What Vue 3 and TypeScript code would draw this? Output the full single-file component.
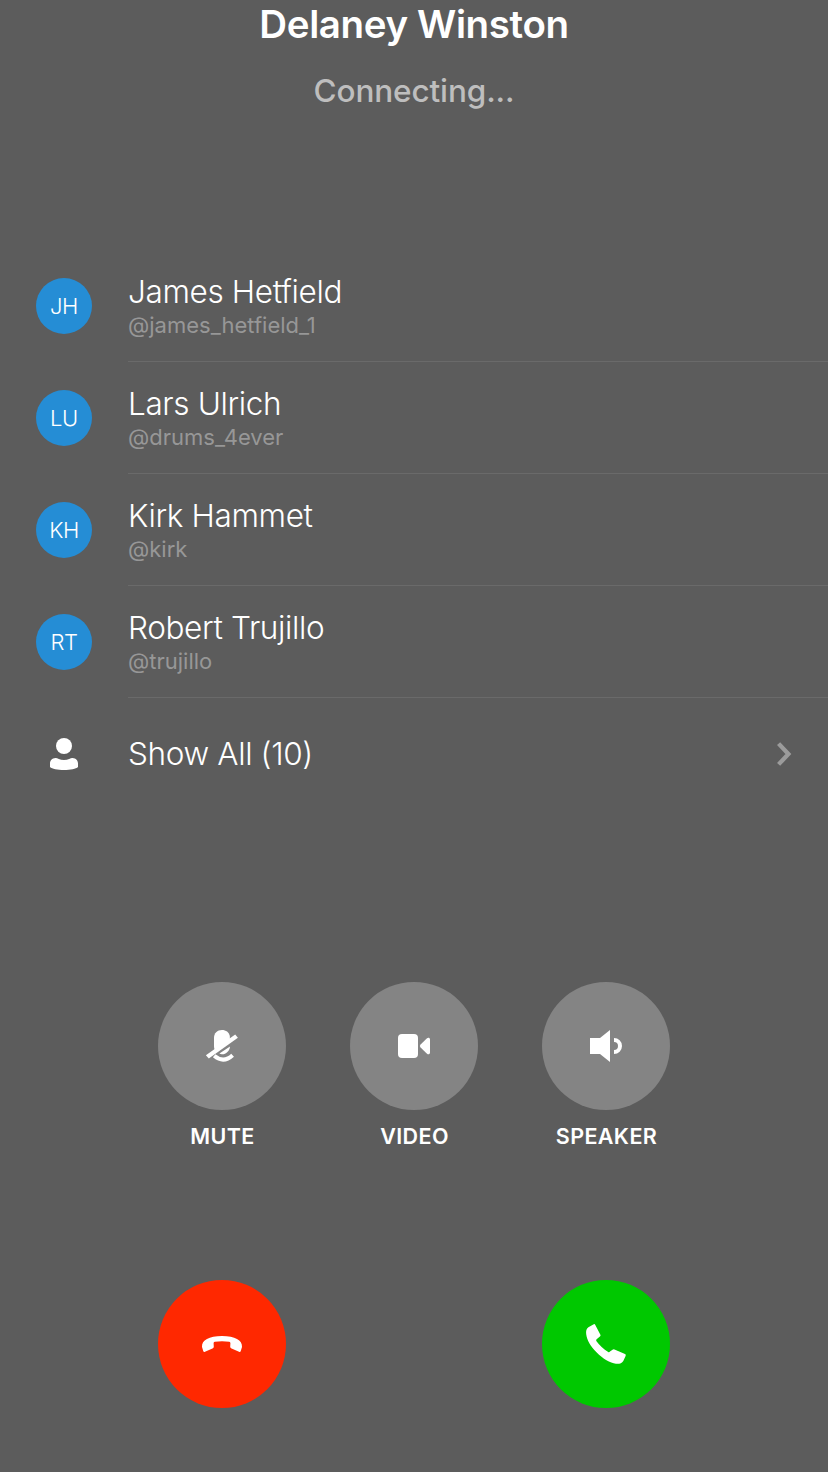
<script setup lang="ts">
interface Participant {
  initials: string
  name: string
  handle: string
}

const participants: Participant[] = [
  { initials: 'JH', name: 'James Hetfield', handle: '@james_hetfield_1' },
  { initials: 'LU', name: 'Lars Ulrich', handle: '@drums_4ever' },
  { initials: 'KH', name: 'Kirk Hammet', handle: '@kirk' },
  { initials: 'RT', name: 'Robert Trujillo', handle: '@trujillo' },
]
</script>

<template>
  <main class="call">
    <header class="header">
      <h1 class="caller">Delaney Winston</h1>
      <p class="status">Connecting...</p>
    </header>

    <ul class="people">
      <li v-for="p in participants" :key="p.handle" class="row">
        <span class="lead"><span class="avatar">{{ p.initials }}</span></span>
        <div class="body">
          <span class="name">{{ p.name }}</span>
          <span class="handle">{{ p.handle }}</span>
        </div>
      </li>
      <li class="row">
        <span class="lead">
          <svg width="48" height="48" viewBox="0 0 48 48" fill="#fff">
            <circle cx="24" cy="16" r="8" />
            <path d="M15.5 28C17 27.7 19.5 30 24 30S31 27.7 32.5 28C36 28.2 38 30.5 38 33.5V37C36 38.8 30.5 40 24 40S12 38.8 10 37V33.5C10 30.5 12 28.2 15.5 28Z" />
          </svg>
        </span>
        <div class="body all">
          <span class="name">Show All (10)</span>
          <svg class="chevron" width="20" height="28" viewBox="0 0 20 28">
            <path d="M4.6 3.6L14.4 14L4.6 24.4" fill="none" stroke="#9b9b9b" stroke-width="4.3" />
          </svg>
        </div>
      </li>
    </ul>

    <section class="controls">
      <div class="control">
        <button class="round" aria-label="Mute">
          <svg width="56" height="52" viewBox="0 0 56 52" fill="#fff">
            <path d="M20 18C20 13.2 23.2 10 28 10C32 10 35 12.2 35.8 16L36 22L22 31.5C20.7 30.2 20 28.4 20 26Z" />
            <path d="M11.9 35.2L41.2 14.4L43.9 17.8L14.8 38.4Z" />
            <path d="M25.4 33.4L36 26.4C35.6 31 32 34.3 28 34.2C27 34.2 26.2 33.9 25.4 33.4Z" />
            <path d="M20.2 35.8Q29.5 43.6 38.6 35.2" fill="none" stroke="#fff" stroke-width="4" />
          </svg>
        </button>
        <span class="label">MUTE</span>
      </div>
      <div class="control">
        <button class="round" aria-label="Video">
          <svg width="56" height="52" viewBox="0 0 56 52" fill="#fff">
            <rect x="12" y="14" width="20" height="24" rx="4" />
            <path d="M34.6 24.4L41 18.3C42.3 17.2 44 17.8 44 19.5V32.5C44 34.2 42.3 34.8 41 33.7L34.6 27.6Q33 26 34.6 24.4Z" />
          </svg>
        </button>
        <span class="label">VIDEO</span>
      </div>
      <div class="control">
        <button class="round" aria-label="Speaker">
          <svg width="56" height="52" viewBox="0 0 56 52" fill="#fff">
            <path d="M12 18H22L32 10V42L22 34H12Z" />
            <path d="M36 20A6 6 0 0 1 36 32" fill="none" stroke="#fff" stroke-width="4" />
          </svg>
        </button>
        <span class="label">SPEAKER</span>
      </div>
    </section>

    <section class="actions">
      <button class="round decline" aria-label="Decline">
        <svg width="56" height="56" viewBox="0 0 56 56" fill="#fff">
          <path d="M8 31C7.6 24 15 20 28 20S48.4 24 48 31L46.6 35.4Q46 36.2 45 35.7L37 32.2Q36.2 31.8 36.2 30.8L36.4 27Q36.3 26 35.3 25.8Q28 24.6 20.7 25.8Q19.7 26 19.6 27L19.8 30.8Q19.8 31.8 19 32.2L11 35.7Q10 36.2 9.4 35.4Z" />
        </svg>
      </button>
      <button class="round accept" aria-label="Accept">
        <svg width="56" height="56" viewBox="0 0 56 56" fill="#fff">
          <path d="M10.4 11.3L15.3 8.4Q16.7 7.6 17.3 8.9L22.4 18.7Q22.9 19.8 21.9 20.5L18.6 23.2Q17.9 24 18.3 25C21.1 29 25.8 33.3 30.2 36Q31.3 36.5 32 35.6L34.5 33.8Q35.4 33 36.5 33.5L47 38.1Q48.3 38.8 47.6 40.1L45.3 45C43.8 47.5 41.3 48.1 38 47.8C32 47 25.2 43.1 18.5 36.3C12.4 30.1 9 24 8.2 18.2C7.8 15 8.4 12.7 10.4 11.3Z" />
        </svg>
      </button>
    </section>
  </main>
</template>

<style>
body {
  margin: 0;
  background: #5c5c5c;
}
</style>

<style scoped>
.call {
  width: 828px;
  height: 1472px;
  overflow: hidden;
  background: #5c5c5c;
  color: #fff;
  font-family: Inter, "Liberation Sans", sans-serif;
  font-feature-settings: "calt" 0, "liga" 0;
}
.header {
  height: 250px;
  text-align: center;
}
.caller {
  margin: 0;
  font-size: 38.5px;
  line-height: 48px;
  font-weight: 600;
  letter-spacing: -0.38px;
}
.status {
  margin: 23px 0 0;
  font-size: 31.5px;
  line-height: 40px;
  font-weight: 500;
  letter-spacing: -0.12px;
  color: #bebebe;
}
.people {
  margin: 0;
  padding: 0;
  list-style: none;
}
.row {
  display: flex;
  height: 112px;
}
.lead {
  width: 128px;
  display: flex;
  align-items: center;
  justify-content: center;
}
.avatar {
  width: 56px;
  height: 56px;
  border-radius: 50%;
  background: #258dd5;
  font-size: 22px;
  line-height: 56px;
  font-weight: 300;
  letter-spacing: -0.4px;
  text-align: center;
}
.body {
  flex: 1;
  box-sizing: border-box;
  padding-top: 24px;
  border-bottom: 1px solid #6a6a6a;
  display: flex;
  flex-direction: column;
}
.name {
  font-size: 31.5px;
  line-height: 36px;
  font-weight: 300;
  letter-spacing: -0.36px;
}
.handle {
  font-size: 22px;
  line-height: 30px;
  color: #979797;
}
.all {
  padding: 0 34px 0 0;
  border: 0;
  flex-direction: row;
  align-items: center;
  justify-content: space-between;
}
.controls {
  display: flex;
  justify-content: center;
  gap: 64px;
  box-sizing: border-box;
  height: 470px;
  padding-top: 172px;
}
.control {
  width: 128px;
  display: flex;
  flex-direction: column;
  align-items: center;
}
.round {
  width: 128px;
  height: 128px;
  padding: 0;
  border: 0;
  border-radius: 50%;
  background: #848484;
  display: flex;
  align-items: center;
  justify-content: center;
}
.label {
  margin-top: 11px;
  padding-left: 1px;
  font-size: 21.5px;
  line-height: 30px;
  font-weight: 600;
  letter-spacing: 0.4px;
}
.actions {
  display: flex;
  justify-content: space-between;
  padding: 0 158px;
}
.decline {
  background: #ff2800;
}
.accept {
  background: #00c800;
}
</style>
